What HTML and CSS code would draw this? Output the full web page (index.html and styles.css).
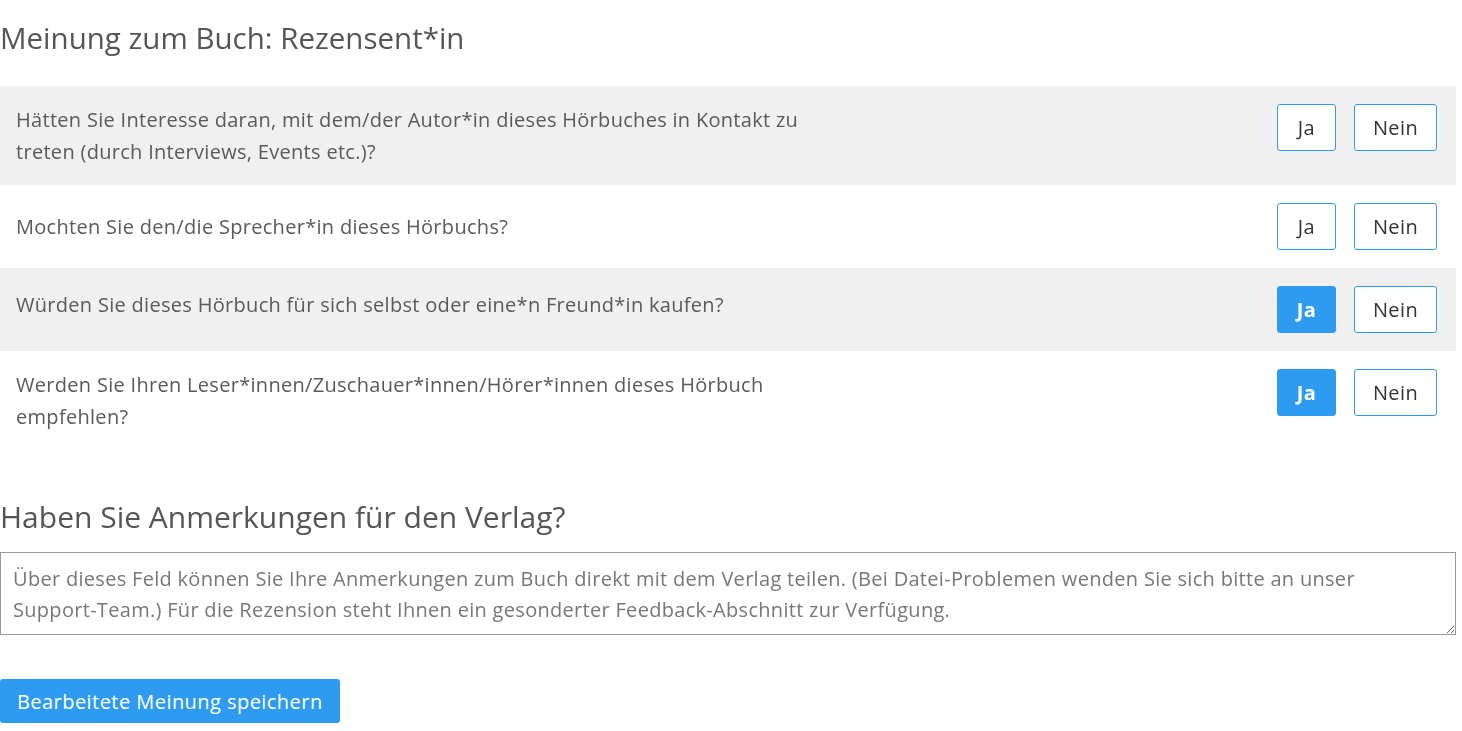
FILE: index.html
```html
<!DOCTYPE html>
<html lang="de">
<head>
<meta charset="utf-8">
<title>Meinung zum Buch</title>
<link rel="stylesheet" href="styles.css">
</head>
<body>
<main class="page">
  <h1 class="title">Meinung zum Buch: Rezensent*in</h1>

  <section class="questions">
    <div class="q q--shaded">
      <p class="q-text">Hätten Sie Interesse daran, mit dem/der Autor*in dieses Hörbuches in Kontakt zu treten (durch Interviews, Events etc.)?</p>
      <div class="choices">
        <button class="choice choice--ja" type="button">Ja</button>
        <button class="choice choice--nein" type="button">Nein</button>
      </div>
    </div>
    <div class="q">
      <p class="q-text q-text--low">Mochten Sie den/die Sprecher*in dieses Hörbuchs?</p>
      <div class="choices">
        <button class="choice choice--ja" type="button">Ja</button>
        <button class="choice choice--nein" type="button">Nein</button>
      </div>
    </div>
    <div class="q q--shaded">
      <p class="q-text q-text--mid">Würden Sie dieses Hörbuch für sich selbst oder eine*n Freund*in kaufen?</p>
      <div class="choices">
        <button class="choice choice--ja is-active" type="button">Ja</button>
        <button class="choice choice--nein" type="button">Nein</button>
      </div>
    </div>
    <div class="q">
      <p class="q-text">Werden Sie Ihren Leser*innen/Zuschauer*innen/Hörer*innen dieses Hörbuch empfehlen?</p>
      <div class="choices">
        <button class="choice choice--ja is-active" type="button">Ja</button>
        <button class="choice choice--nein" type="button">Nein</button>
      </div>
    </div>
  </section>

  <h2 class="subtitle">Haben Sie Anmerkungen für den Verlag?</h2>
  <textarea class="notes">Über dieses Feld können Sie Ihre Anmerkungen zum Buch direkt mit dem Verlag teilen. (Bei Datei-Problemen wenden Sie sich bitte an unser Support-Team.) Für die Rezension steht Ihnen ein gesonderter Feedback-Abschnitt zur Verfügung.</textarea>

  <div class="actions">
    <button class="save" type="button">Bearbeitete Meinung speichern</button>
  </div>
</main>
</body>
</html>
```

FILE: styles.css
```css
* { box-sizing: border-box; }

html, body {
  margin: 0;
  padding: 0;
  background: #fff;
}

body {
  font-family: "Open Sans", "Liberation Sans", sans-serif;
  color: #555;
}

.page {
  width: 1456px;
}

.title {
  margin: 0;
  padding-top: 18px;
  font-size: 29.5px;
  font-weight: 400;
  line-height: 40px;
  color: #555;
}

.questions {
  margin-top: 28px;
}

.q {
  display: flex;
  justify-content: space-between;
  align-items: flex-start;
  padding: 18px 19px 18px 16px;
}

.q--shaded {
  background: #f0f0f0;
}

.q-text {
  margin: 0;
  width: 820px;
  font-size: 20px;
  letter-spacing: 0.3px;
  line-height: 31.5px;
  color: #5a5a5a;
}

.q-text--low {
  padding-top: 8px;
}

.q-text--mid {
  padding-top: 3px;
}

.choices {
  display: flex;
  gap: 18px;
}

.choice {
  height: 47px;
  border: 1px solid #2e9bf1;
  border-radius: 3px;
  background: #fff;
  color: #333;
  font-family: inherit;
  font-size: 20px;
  letter-spacing: 0.4px;
  padding: 0;
  cursor: pointer;
}

.choice--ja { width: 59px; }
.choice--nein { width: 83px; }

.choice.is-active {
  background: #2e9bf1;
  color: #fff;
  font-weight: 700;
}

.subtitle {
  margin: 47px 0 0;
  font-size: 30px;
  font-weight: 400;
  line-height: 40px;
  color: #555;
}

.notes {
  display: block;
  width: 1456px;
  height: 83px;
  margin-top: 15px;
  padding: 10px 12px;
  border: 1px solid #999;
  border-radius: 0;
  font-family: inherit;
  font-size: 20px;
  letter-spacing: 0.3px;
  line-height: 31px;
  color: #777;
  resize: both;
}

.actions {
  margin-top: 44px;
}

.save {
  height: 44px;
  padding: 0 17px;
  border: 0;
  border-radius: 3px;
  background: #2e9bf1;
  color: #fff;
  font-family: inherit;
  font-size: 20px;
  letter-spacing: 0.45px;
  cursor: pointer;
}
```
